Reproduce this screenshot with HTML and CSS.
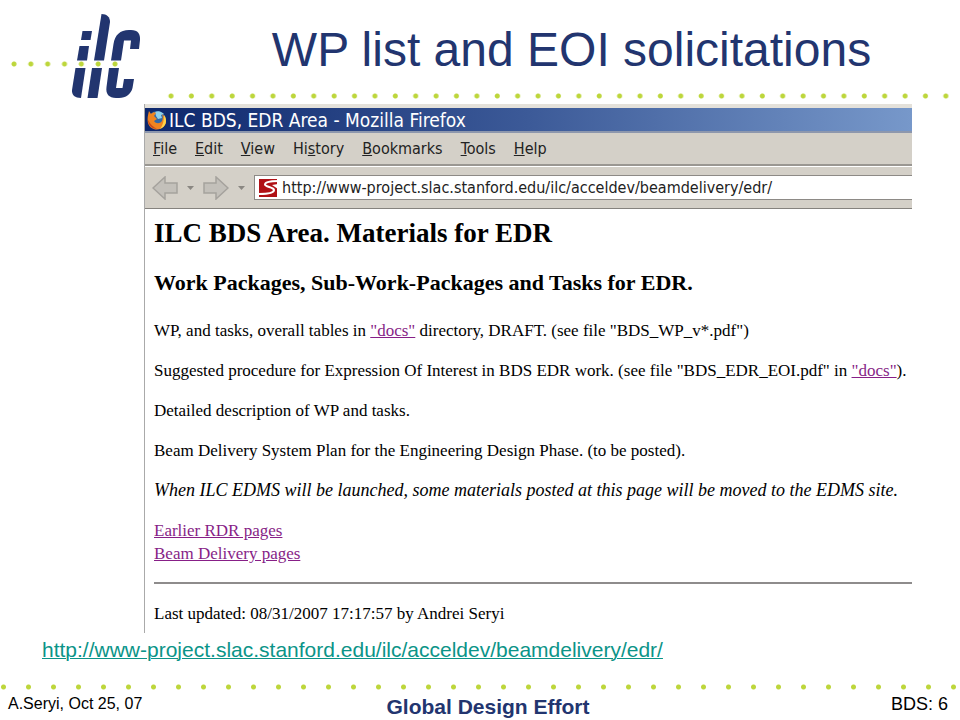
FILE: index.html
```html
<!DOCTYPE html>
<html lang="en">
<head>
  <meta charset="UTF-8">
  <title>WP list and EOI solicitations</title>
  <meta name="viewport" content="width=device-width, initial-scale=1.0">
  <link rel="stylesheet" href="styles.css">
</head>
<body>
  <div class="slide">
    <!-- Header -->
    <header class="slide-header">
      <div class="logo">
        <svg class="logo-mark" viewBox="71 14 70 86" width="70" height="86" role="img" aria-label="ilc">
          <g fill="#22356f">
            <path d="M82.500 31H92L90.500 40H81z"/>
            <path d="M79.500 46H89L87 60.500H77z"/>
            <path d="M101.500 14C107 14 110 17 110 22L104 60.500H94z"/>
            <path d="M111 60.500L113.500 44C115 35 120 30 129 30H131C138 30 140.500 34 140 40L139 49H130L131 40.500H124L121 60.500z"/>
            <path d="M75.500 68H85.500L81 98C75 98 71.500 95 72 90z"/>
            <path d="M92 68H102L97.500 98H87.500z"/>
            <path d="M109 68H119L116 88H122.500L124 79H134L132.500 88C131 94 126 98 119 98H116C109 98 105.500 94 106.500 87z"/>
          </g>
        </svg>
        <div class="dots dots-logo"></div>
      </div>
      <h1 class="slide-title">WP list and EOI solicitations</h1>
      <div class="dots dots-top"></div>
    </header>

    <!-- Browser window -->
    <main class="browser">
      <div class="title-bar">
        <svg width="22" height="22" viewBox="0 0 22 22" aria-hidden="true">
          <circle cx="11" cy="11" r="9" fill="#2f68a8"/>
          <path d="M9 3c4-2 7 0 9 2l-3 1 1 3-4 1-2-3z" fill="#8fd0ea"/>
          <path d="M3 2l2 3c2-2 4-2 5-1L8 7l3 3-3 2c2 3 6 3 8 0 1-2 1-5 0-7 5 4 5 9 2 12-5 6-14 4-16-3-1-4 0-8 1-12z" fill="#ee8420"/>
          <path d="M18 6c4 5 2 12-4 14 3-4 4-8 4-14z" fill="#ffd34a"/>
          <path d="M2 11c0 5 4 9 9 9-4-2-7-5-9-9z" fill="#c9491c"/>
        </svg>
        <span>ILC BDS, EDR Area - Mozilla Firefox</span>
      </div>
      <nav class="menu-bar">
        <button class="menu-btn"><u>F</u>ile</button>
        <button class="menu-btn"><u>E</u>dit</button>
        <button class="menu-btn"><u>V</u>iew</button>
        <button class="menu-btn">Hi<u>s</u>tory</button>
        <button class="menu-btn"><u>B</u>ookmarks</button>
        <button class="menu-btn"><u>T</u>ools</button>
        <button class="menu-btn"><u>H</u>elp</button>
      </nav>
      <div class="tool-bar">
        <button class="nav-btn" aria-label="Back">
          <svg width="26" height="24" viewBox="0 0 26 24"><path d="M1 12L13 1v6h12v10H13v6z" fill="#c3c0ba" stroke="#a5a29d" stroke-width="1.500"/></svg>
        </button>
        <button class="drop-btn" aria-label="Back history"><svg width="7" height="4" viewBox="0 0 7 4"><path d="M0 0h7L3.500 4z" fill="#8a8782"/></svg></button>
        <button class="nav-btn" aria-label="Forward">
          <svg width="26" height="24" viewBox="0 0 26 24"><path d="M25 12L13 1v6H1v10h12v6z" fill="#c3c0ba" stroke="#a5a29d" stroke-width="1.500"/></svg>
        </button>
        <button class="drop-btn" aria-label="Forward history"><svg width="7" height="4" viewBox="0 0 7 4"><path d="M0 0h7L3.500 4z" fill="#8a8782"/></svg></button>
        <div class="address">
          <svg width="19" height="18" viewBox="0 0 19 18" aria-hidden="true">
            <path d="M0 0h18v18H0z" fill="#b01116"/>
            <path d="M19 2C12 2 6 3 6 5.500S15 8 15 11s-7 4-15 4" fill="none" stroke="#fff" stroke-width="2"/>
            <path d="M19 5l-6 1 6 4z" fill="#fff"/>
          </svg>
          <input class="address-input" type="text" aria-label="Address" value="http://www-project.slac.stanford.edu/ilc/acceldev/beamdelivery/edr/">
        </div>
      </div>
      <article class="page">
        <h2>ILC BDS Area. Materials for EDR</h2>
        <h3>Work Packages, Sub-Work-Packages and Tasks for EDR.</h3>
        <p>WP, and tasks, overall tables in <a href="#">"docs"</a> directory, DRAFT. (see file "BDS_WP_v*.pdf")</p>
        <p>Suggested procedure for Expression Of Interest in BDS EDR work. (see file "BDS_EDR_EOI.pdf" in <a href="#">"docs"</a>).</p>
        <p>Detailed description of WP and tasks.</p>
        <p>Beam Delivery System Plan for the Engineering Design Phase. (to be posted).</p>
        <p class="note">When ILC EDMS will be launched, some materials posted at this page will be moved to the EDMS site.</p>
        <p><a href="#">Earlier RDR pages</a><br><a href="#">Beam Delivery pages</a></p>
        <hr>
        <p>Last updated: 08/31/2007 17:17:57 by Andrei Seryi</p>
      </article>
    </main>

    <a class="source-link" href="http://www-project.slac.stanford.edu/ilc/acceldev/beamdelivery/edr/">http://www-project.slac.stanford.edu/ilc/acceldev/beamdelivery/edr/</a>

    <!-- Footer -->
    <footer class="slide-footer">
      <div class="dots dots-bottom"></div>
      <div class="footer-row">
        <span class="footer-author">A.Seryi, Oct 25, 07</span>
        <strong class="footer-name">Global Design Effort</strong>
        <span class="footer-page">BDS: 6</span>
      </div>
    </footer>
  </div>
</body>
</html>
```
FILE: styles.css
```css
* { box-sizing: border-box; }
body {
  margin: 0;
  background: #fff;
  color: #000;
  font-family: "Liberation Sans", Arial, sans-serif;
}
.slide {
  min-height: 100vh;
  display: flex;
  flex-direction: column;
  overflow: hidden;
}

/* Header */
.slide-header {
  position: relative;
  height: 104px;
  display: flex;
}
.logo {
  position: relative;
  width: 145px;
  padding: 14px 0 0 71px;
}
.logo-mark { display: block; }
.slide-title {
  flex: 1;
  margin: 0;
  padding: 20px 0 0 38px;
  text-align: center;
  font-size: 48px;
  line-height: 60px;
  font-weight: 400;
  color: #22356f;
  white-space: nowrap;
}
.dots {
  height: 6px;
  background-image: radial-gradient(circle, #bdd63b 2px, transparent 3px);
  background-size: 20px 6px;
  background-repeat: space no-repeat;
}
.dots-logo {
  position: absolute;
  left: 6px;
  top: 61px;
  width: 117px;
  background-size: 16px 6px;
}
.dots-top {
  position: absolute;
  left: 161px;
  right: 4px;
  top: 93px;
}

/* Browser window */
.browser {
  margin: 0 48px 0 144px;
  border-left: 1px solid #aaa;
  background: #fff;
}
.title-bar {
  display: flex;
  align-items: center;
  gap: 1px;
  height: 29px;
  padding-left: 1px;
  border-top: 4px solid #e4e1da;
  border-bottom: 2px solid #8d97ad;
  background: linear-gradient(90deg, #0d276c, #3c5a98 50%, #7798ca);
  color: #fff;
  font: 19px/22px "DejaVu Sans Condensed", "Noto Sans", sans-serif;
}
.menu-bar {
  display: flex;
  align-items: center;
  gap: 18px;
  height: 33px;
  padding-left: 8px;
  background: #d4d0c8;
  border-bottom: 2px solid #9a9792;
}
.menu-btn {
  padding: 0;
  border: 0;
  background: none;
  font: 16px/24px "DejaVu Sans Condensed", "Noto Sans", sans-serif;
  color: #222;
}
.tool-bar {
  display: flex;
  align-items: center;
  height: 43px;
  padding-left: 7px;
  background: #d4d0c8;
  border-top: 1px solid #fff;
  border-bottom: 1px solid #85827e;
}
.nav-btn, .drop-btn {
  display: flex;
  align-items: center;
  justify-content: center;
  width: 26px;
  height: 24px;
  padding: 0;
  border: 0;
  background: none;
}
.drop-btn { width: 25px; }
.address {
  flex: 1;
  display: flex;
  align-items: center;
  gap: 4px;
  height: 25px;
  padding-left: 4px;
  background: #fff;
  border: 1px solid #8d8a86;
  border-right: 0;
}
.address-input {
  flex: 1;
  min-width: 0;
  padding: 0;
  border: 0;
  outline: 0;
  background: none;
  font: 16px/22px "DejaVu Sans Condensed", "Noto Sans", sans-serif;
  color: #222;
}
.page {
  padding: 8px 0 8px 9px;
  font: 17px/23px "Liberation Serif", "Times New Roman", serif;
}
.page h2 {
  margin: 0 0 22px;
  font-size: 27px;
  line-height: 32px;
}
.page h3 {
  margin: 0 0 24px;
  font-size: 22px;
  line-height: 24px;
}
.page p { margin: 0 0 17px; }
.page p:last-child { margin-bottom: 0; }
.page .note {
  font-size: 18px;
  font-style: italic;
}
.page a { color: #871f87; }
.page hr {
  margin: 0 0 18px;
  border: 0;
  border-top: 2px solid #8e8c8c;
}

.source-link {
  align-self: flex-start;
  margin: 5px 0 0 42px;
  font-size: 21px;
  line-height: 24px;
  color: #0b9488;
  text-decoration-thickness: 1px;
}

/* Footer */
.slide-footer { margin-top: auto; }
.dots-bottom {
  background-size: 25px 6px;
  background-position: -9px 0;
  background-repeat: repeat-x;
}
.footer-row {
  display: grid;
  grid-template-columns: 1fr auto 1fr;
  align-items: start;
  padding: 4px 12px 0 8px;
  height: 30px;
}
.footer-author {
  font-size: 16px;
  line-height: 20px;
}
.footer-name {
  padding-left: 20px;
  font-size: 21px;
  line-height: 26px;
  color: #22356f;
}
.footer-page {
  text-align: right;
  font-size: 18px;
  line-height: 20px;
}
```
